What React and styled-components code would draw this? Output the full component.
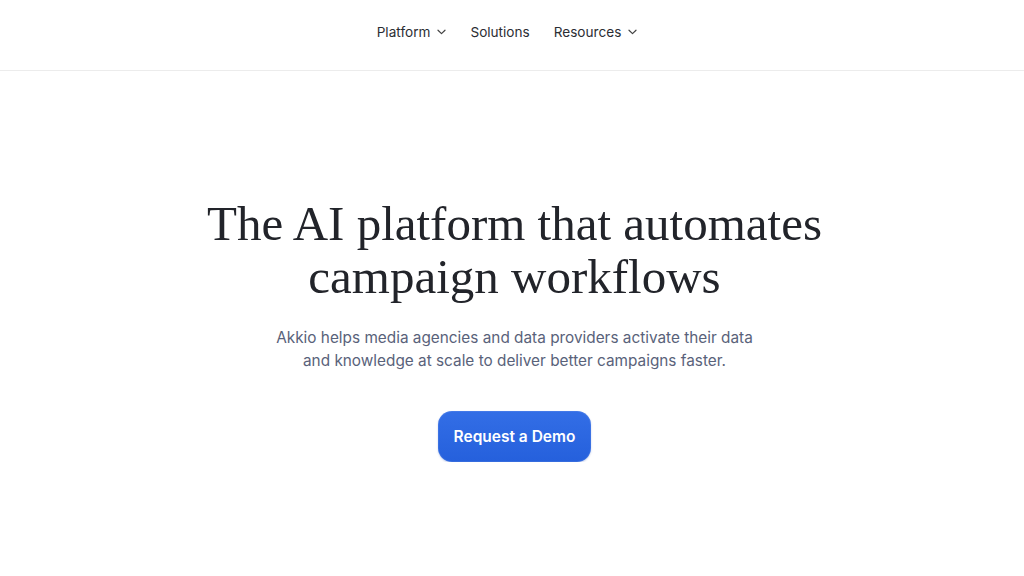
import React from 'react';
import styled, { createGlobalStyle } from 'styled-components';

const Global = createGlobalStyle`
  html, body {
    margin: 0;
    padding: 0;
    background: #fff;
  }
  body {
    font-family: Inter, "Liberation Sans", sans-serif;
    -webkit-font-smoothing: antialiased;
  }
`;

const Header = styled.header`
  height: 70px;
  border-bottom: 1px solid #ececec;
  display: flex;
  justify-content: center;
  align-items: center;
`;

const Nav = styled.nav`
  display: flex;
  align-items: center;
  gap: 24px;
  margin: -6px 10px 0 0;
`;

const NavItem = styled.a`
  display: flex;
  align-items: center;
  gap: 7px;
  font-size: 13.6px;
  color: #2b2d33;
  text-decoration: none;
  cursor: pointer;
`;

const Hero = styled.main`
  display: flex;
  flex-direction: column;
  align-items: center;
  padding: 126px 0 0 5px;
  text-align: center;
`;

const Title = styled.h1`
  margin: 0;
  font-family: "Liberation Serif", serif;
  font-weight: 400;
  font-size: 49px;
  line-height: 53px;
  letter-spacing: 0;
  color: #22242a;
`;

const Lead = styled.p`
  margin: 23px 0 0;
  font-size: 15.35px;
  line-height: 23px;
  color: #59627a;
`;

const Button = styled.button`
  margin-top: 39px;
  width: 153px;
  height: 51px;
  border: none;
  border-radius: 14px;
  background: linear-gradient(180deg, #336ee6 0%, #2560dc 100%);
  box-shadow: inset 0 0 0 1px rgba(255,255,255,0.08), 0 1px 2px rgba(30,70,180,0.25);
  color: #fff;
  font-family: Inter, "Liberation Sans", sans-serif;
  font-size: 15.5px;
  font-weight: 600;
  cursor: pointer;
`;

const Chevron = () => (
  <svg width="9" height="6" viewBox="0 0 9 6" fill="none">
    <path d="M1 1.2L4.5 4.6L8 1.2" stroke="#444" strokeWidth="1.2" strokeLinecap="round" strokeLinejoin="round" />
  </svg>
);

export default function App() {
  return (
    <>
      <Global />
      <Header>
        <Nav>
          <NavItem>Platform <Chevron /></NavItem>
          <NavItem>Solutions</NavItem>
          <NavItem>Resources <Chevron /></NavItem>
        </Nav>
      </Header>
      <Hero>
        <Title>
          The AI platform that automates
          <br />
          campaign workflows
        </Title>
        <Lead>
          Akkio helps media agencies and data providers activate their data
          <br />
          and knowledge at scale to deliver better campaigns faster.
        </Lead>
        <Button>Request a Demo</Button>
      </Hero>
    </>
  );
}
